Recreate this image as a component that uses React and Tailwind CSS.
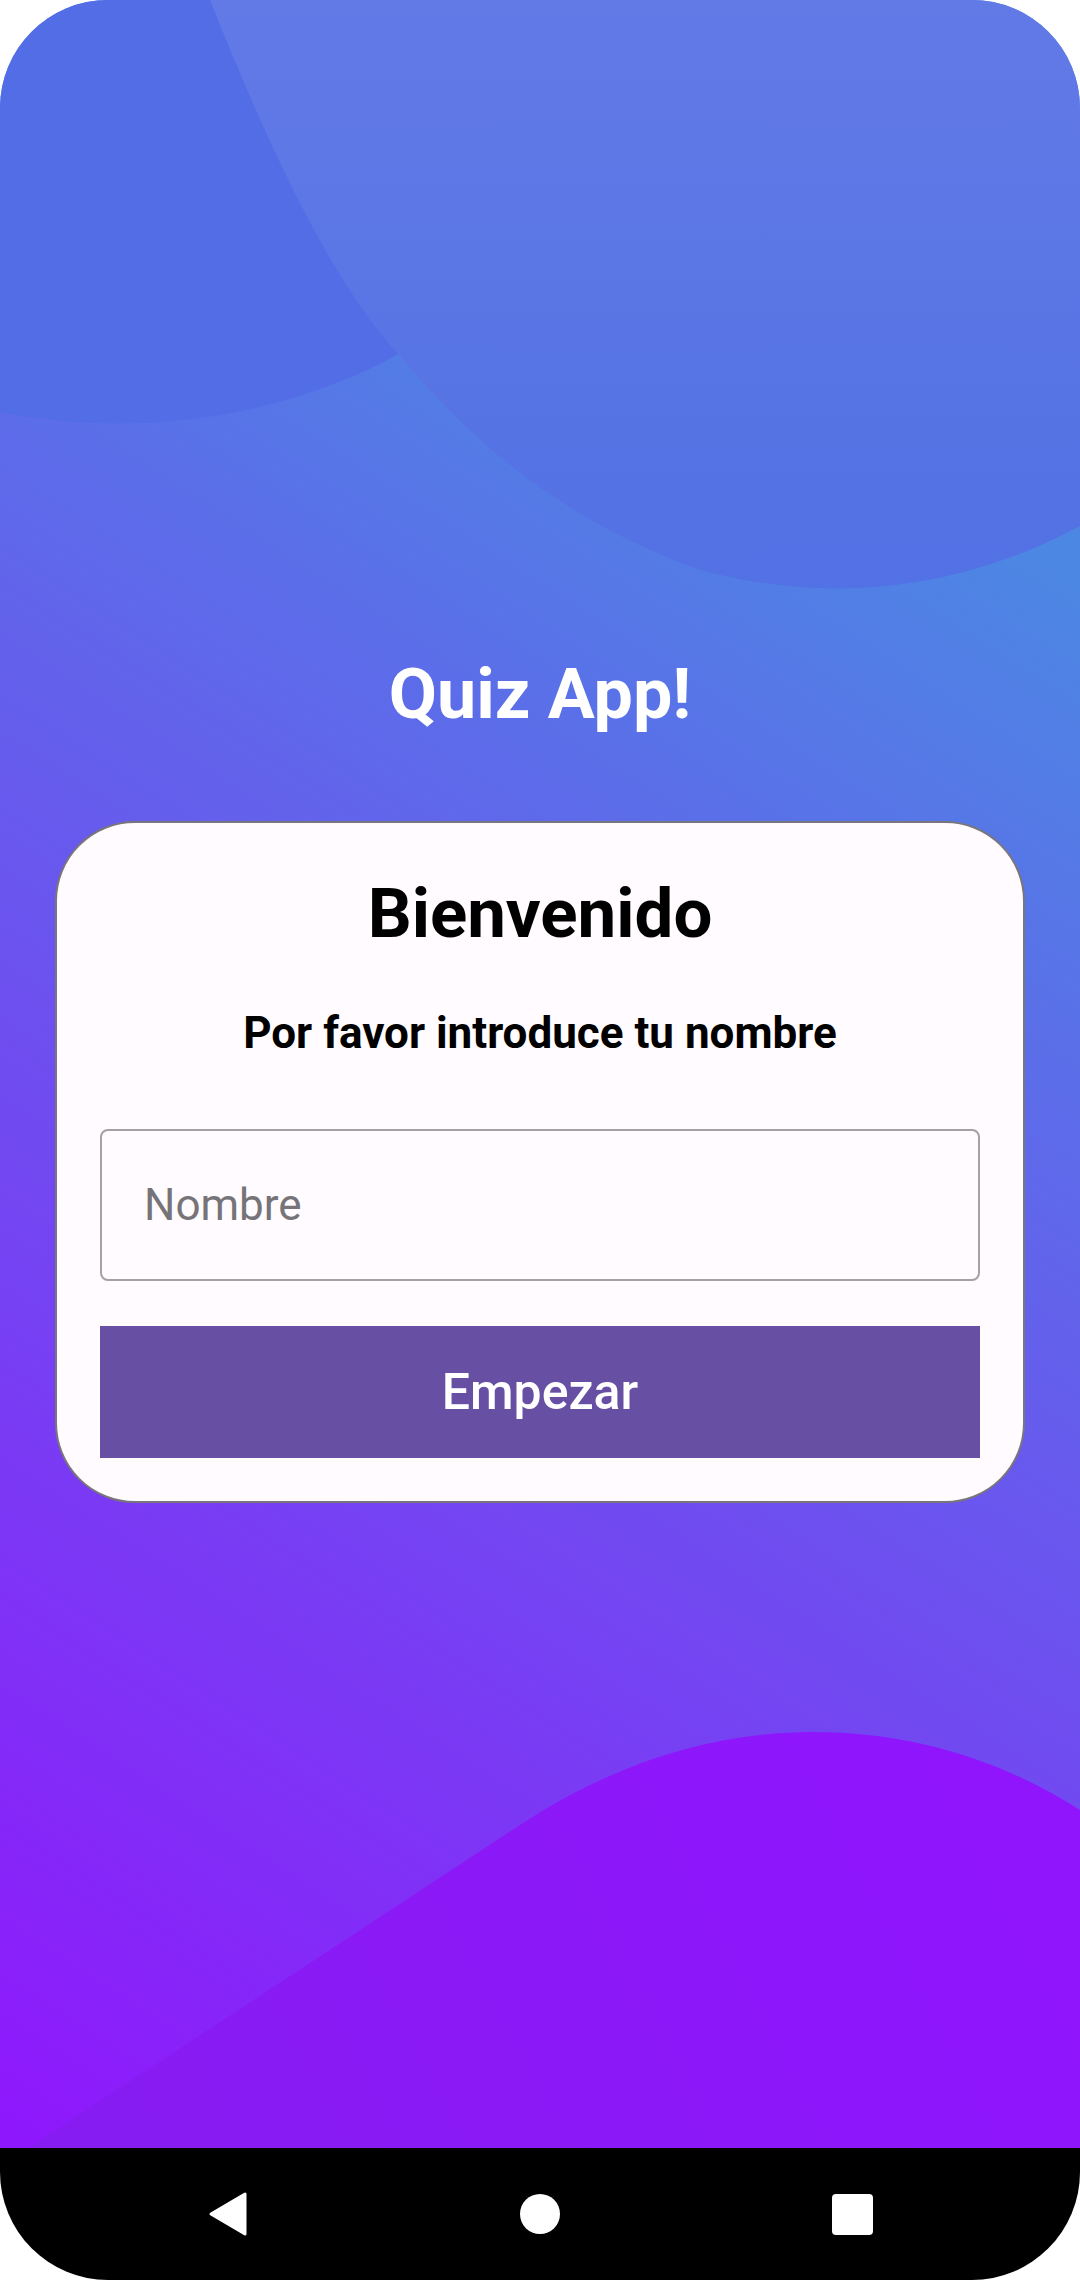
import React from 'react';

const Background = () => (
  <svg
    className="absolute inset-0"
    width="1080"
    height="2148"
    viewBox="0 0 1080 2148"
    xmlns="http://www.w3.org/2000/svg"
  >
    <defs>
      <linearGradient id="base" gradientUnits="userSpaceOnUse" x1="1080" y1="560" x2="40" y2="2164">
        <stop offset="0" stopColor="#4c88e3" />
        <stop offset="1" stopColor="#8f17fc" />
      </linearGradient>
      <linearGradient id="blobB" gradientUnits="userSpaceOnUse" x1="0" y1="0" x2="0" y2="590">
        <stop offset="0" stopColor="#627ae6" />
        <stop offset="1" stopColor="#5271e4" />
      </linearGradient>
      <linearGradient id="wave" gradientUnits="userSpaceOnUse" x1="950" y1="1740" x2="150" y2="2150">
        <stop offset="0" stopColor="#9015fd" />
        <stop offset="1" stopColor="#871cf2" />
      </linearGradient>
    </defs>
    <rect width="1080" height="2148" fill="url(#base)" />
    {/* top-left blob */}
    <path d="M0 0 L330 0 L402 352 C300 410, 150 442, 0 412 Z" fill="#536de6" />
    {/* big top-right blob */}
    <path
      d="M210 0 C270 150, 330 280, 400 356 C470 440, 560 520, 700 570 C850 610, 980 580, 1080 526 L1080 0 Z"
      fill="url(#blobB)"
    />
    {/* bottom wave */}
    <path
      d="M10 2160 L520 1825 C620 1759, 720 1732, 813 1732 C920 1732, 1010 1765, 1080 1810 L1080 2160 Z"
      fill="url(#wave)"
    />
  </svg>
);

const NavBar = () => (
  <div className="h-[132px] bg-black flex items-center justify-center gap-[272px]">
    <svg width="40" height="46" viewBox="0 0 40 46">
      <path d="M3 23 L37 3 L37 43 Z" fill="white" stroke="white" strokeWidth="3" strokeLinejoin="round" />
    </svg>
    <div className="w-10 h-10 rounded-full bg-white" />
    <div className="w-[41px] h-[41px] rounded-[4px] bg-white" />
  </div>
);

export default function App() {
  return (
    <div className="w-[1080px] h-[2280px] bg-white font-[Roboto,sans-serif]">
      <div className="w-full h-full rounded-[108px] overflow-hidden flex flex-col">
        <div className="relative h-[2148px]">
          <Background />
          <div className="relative flex flex-col items-center pt-[653px]">
            <h1 className="text-[70px] leading-[82px] font-bold text-white">Quiz App!</h1>

            <div className="mt-[86px] w-[970px] rounded-[80px] border-2 border-[#79757c] bg-[#fffbfe] px-[43px] pt-[52px] pb-[43px] flex flex-col items-center">
              <h2 className="text-[69px] leading-[78px] font-bold text-black">Bienvenido</h2>
              <p className="mt-[55px] text-[44px] leading-[50px] font-bold text-black">
                Por favor introduce tu nombre
              </p>
              <input
                type="text"
                placeholder="Nombre"
                className="mt-[71px] w-full h-[152px] rounded-[8px] border-2 border-[#a3a1a6] bg-transparent pl-[42px] text-[44px] text-black placeholder:text-[#767479] outline-none"
              />
              <button className="mt-[45px] w-full h-[132px] bg-[#6750a4] text-white text-[50px] font-medium">
                Empezar
              </button>
            </div>
          </div>
        </div>
        <NavBar />
      </div>
    </div>
  );
}
